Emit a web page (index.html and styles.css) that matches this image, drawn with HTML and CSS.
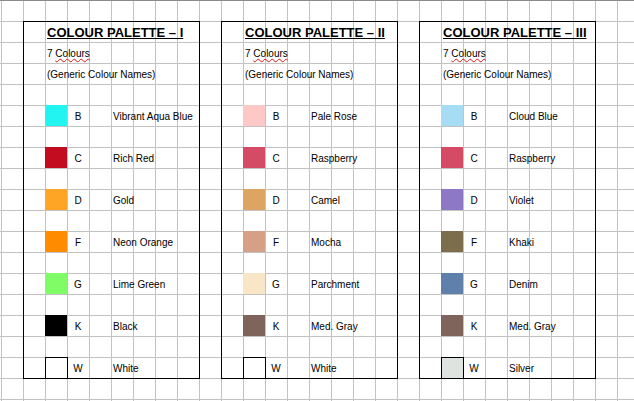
FILE: index.html
```html
<!DOCTYPE html>
<html lang="en">
<head>
    <meta charset="UTF-8">
    <meta name="viewport" content="width=device-width, initial-scale=1.0">
    <title>Colour Palettes</title>
    <link rel="stylesheet" href="styles.css">
</head>
<body>
    <div class="sheet">
        <section class="palette">
            <h2 class="title">COLOUR PALETTE – I</h2>
            <p class="note">7 <span class="spell">Colours</span></p>
            <p class="note">(Generic Colour Names)</p>
            <div class="spacer"></div>
            <ul class="swatches">
                <li class="row"><span class="chip aqua"></span><span class="code">B</span><span class="name">Vibrant Aqua Blue</span></li>
                <li class="row"><span class="chip rich-red"></span><span class="code">C</span><span class="name">Rich Red</span></li>
                <li class="row"><span class="chip gold"></span><span class="code">D</span><span class="name">Gold</span></li>
                <li class="row"><span class="chip neon-orange"></span><span class="code">F</span><span class="name">Neon Orange</span></li>
                <li class="row"><span class="chip lime"></span><span class="code">G</span><span class="name">Lime Green</span></li>
                <li class="row"><span class="chip black"></span><span class="code">K</span><span class="name">Black</span></li>
                <li class="row"><span class="chip white outlined"></span><span class="code">W</span><span class="name">White</span></li>
            </ul>
        </section>

        <section class="palette">
            <h2 class="title">COLOUR PALETTE – II</h2>
            <p class="note">7 <span class="spell">Colours</span></p>
            <p class="note">(Generic Colour Names)</p>
            <div class="spacer"></div>
            <ul class="swatches">
                <li class="row"><span class="chip pale-rose"></span><span class="code">B</span><span class="name">Pale Rose</span></li>
                <li class="row"><span class="chip raspberry"></span><span class="code">C</span><span class="name">Raspberry</span></li>
                <li class="row"><span class="chip camel"></span><span class="code">D</span><span class="name">Camel</span></li>
                <li class="row"><span class="chip mocha"></span><span class="code">F</span><span class="name">Mocha</span></li>
                <li class="row"><span class="chip parchment"></span><span class="code">G</span><span class="name">Parchment</span></li>
                <li class="row"><span class="chip med-gray"></span><span class="code">K</span><span class="name">Med. Gray</span></li>
                <li class="row"><span class="chip white outlined"></span><span class="code">W</span><span class="name">White</span></li>
            </ul>
        </section>

        <section class="palette">
            <h2 class="title">COLOUR PALETTE – III</h2>
            <p class="note">7 <span class="spell">Colours</span></p>
            <p class="note">(Generic Colour Names)</p>
            <div class="spacer"></div>
            <ul class="swatches">
                <li class="row"><span class="chip cloud-blue"></span><span class="code">B</span><span class="name">Cloud Blue</span></li>
                <li class="row"><span class="chip raspberry"></span><span class="code">C</span><span class="name">Raspberry</span></li>
                <li class="row"><span class="chip violet"></span><span class="code">D</span><span class="name">Violet</span></li>
                <li class="row"><span class="chip khaki"></span><span class="code">F</span><span class="name">Khaki</span></li>
                <li class="row"><span class="chip denim"></span><span class="code">G</span><span class="name">Denim</span></li>
                <li class="row"><span class="chip med-gray"></span><span class="code">K</span><span class="name">Med. Gray</span></li>
                <li class="row"><span class="chip silver outlined"></span><span class="code">W</span><span class="name">Silver</span></li>
            </ul>
        </section>
    </div>
</body>
</html>
```

FILE: styles.css
```css
html, body {
    height: 100%;
}
body {
    margin: 0;
    font-family: "Liberation Sans", Arial, sans-serif;
    color: #000;
    background-color: #fff;
    background-image:
        linear-gradient(#8a8a8a, #8a8a8a),
        linear-gradient(to right, #c2c2c2 1px, transparent 1px),
        linear-gradient(to bottom, #c2c2c2 1px, transparent 1px);
    background-size: 100% 1px, 22px 21px, 22px 21px;
    background-position: 0 0, 1px 0, 0 0;
    background-repeat: no-repeat, repeat, repeat;
}
.sheet {
    display: flex;
    gap: 21px;
    padding: 21px 0 0 23px;
}
.palette {
    width: 177px;
    box-sizing: border-box;
    border: 1px solid #000;
}
.title {
    margin: 0;
    height: 20px;
    padding-left: 23px;
    font-size: 13px;
    line-height: 21px;
    font-weight: bold;
    text-decoration: underline;
    text-decoration-thickness: 1px;
    white-space: nowrap;
}
.note {
    margin: 0;
    height: 21px;
    padding-left: 23px;
    font-size: 10px;
    line-height: 23px;
    white-space: nowrap;
}
.spell {
    text-decoration: underline wavy #e01010;
    text-decoration-thickness: 1px;
    text-decoration-skip-ink: none;
    text-underline-offset: 1px;
}
.spacer {
    height: 21px;
}
.swatches {
    list-style: none;
    margin: 0;
    padding: 0;
    display: grid;
    grid-auto-rows: 21px;
    row-gap: 21px;
}
.row {
    display: grid;
    grid-template-columns: 21px 22px 22px 22px 1fr;
    font-size: 10px;
    line-height: 23px;
}
.chip {
    grid-column: 2;
    width: 22px;
    height: 21px;
    box-sizing: border-box;
}
.chip.outlined {
    width: 23px;
    height: 22px;
    border: 1px solid #000;
}
.code {
    text-align: center;
}
.name {
    grid-column: 5;
    padding-left: 2px;
    white-space: nowrap;
}

/* swatch colours */
.aqua { background: #22f4f2; }
.rich-red { background: #c40c20; }
.gold { background: #ffa526; }
.neon-orange { background: #ff8c00; }
.lime { background: #80fc66; }
.black { background: #000; }
.white { background: #fff; }
.pale-rose { background: #fdc8c5; }
.raspberry { background: #d54b66; }
.camel { background: #dea462; }
.mocha { background: #d5a086; }
.parchment { background: #f8e6c6; }
.med-gray { background: #7e645a; }
.cloud-blue { background: #a6dcf4; }
.violet { background: #8d78c6; }
.khaki { background: #7c6d4c; }
.denim { background: #6080ac; }
.silver { background: #dfe3df; }
```
